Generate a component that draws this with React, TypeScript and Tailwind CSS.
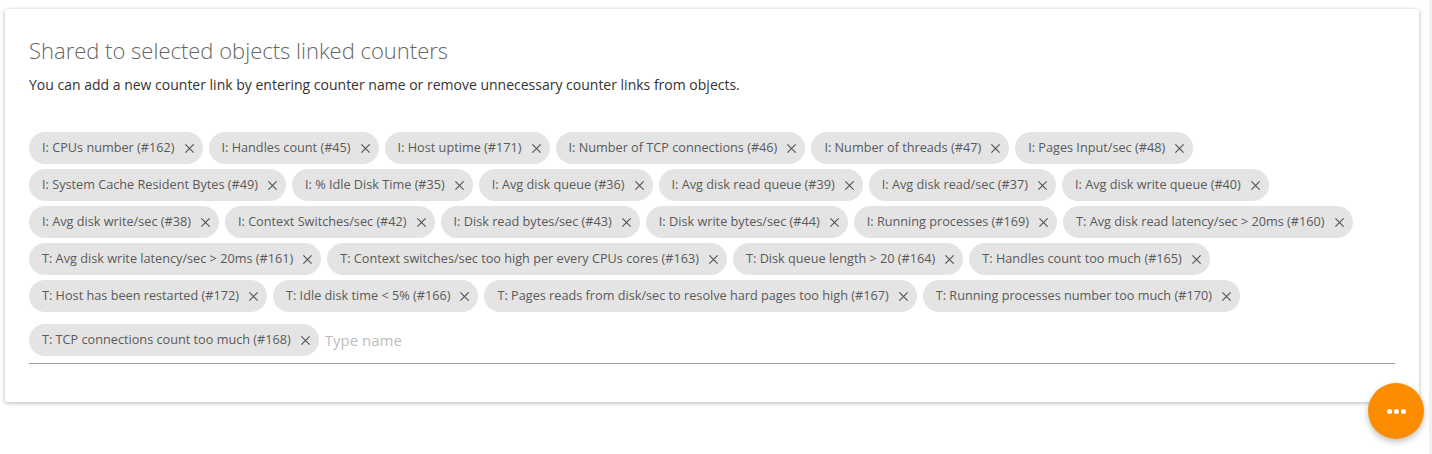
const counters = [
  "I: CPUs number (#162)",
  "I: Handles count (#45)",
  "I: Host uptime (#171)",
  "I: Number of TCP connections (#46)",
  "I: Number of threads (#47)",
  "I: Pages Input/sec (#48)",
  "I: System Cache Resident Bytes (#49)",
  "I: % Idle Disk Time (#35)",
  "I: Avg disk queue (#36)",
  "I: Avg disk read queue (#39)",
  "I: Avg disk read/sec (#37)",
  "I: Avg disk write queue (#40)",
  "I: Avg disk write/sec (#38)",
  "I: Context Switches/sec (#42)",
  "I: Disk read bytes/sec (#43)",
  "I: Disk write bytes/sec (#44)",
  "I: Running processes (#169)",
  "T: Avg disk read latency/sec > 20ms (#160)",
  "T: Avg disk write latency/sec > 20ms (#161)",
  "T: Context switches/sec too high per every CPUs cores (#163)",
  "T: Disk queue length > 20 (#164)",
  "T: Handles count too much (#165)",
  "T: Host has been restarted (#172)",
  "T: Idle disk time < 5% (#166)",
  "T: Pages reads from disk/sec to resolve hard pages too high (#167)",
  "T: Running processes number too much (#170)",
  "T: TCP connections count too much (#168)",
];

function Chip({ label }: { label: string }) {
  return (
    <div className="flex h-8 items-center rounded-full bg-[#e4e4e4] pl-[13px] pr-[8px]">
      <span className="text-[12.7px] text-[#5a5a5a] whitespace-nowrap">{label}</span>
      <svg className="ml-[9px] w-[11px] h-[11px] text-[#555]" viewBox="0 0 12 12" fill="none" stroke="currentColor" strokeWidth={1.3}>
        <path d="M1.5 1.5l9 9M10.5 1.5l-9 9" />
      </svg>
    </div>
  );
}

export default function App() {
  return (
    <div className="relative w-[1432px] h-[454px] bg-white overflow-hidden" style={{ fontFamily: '"Open Sans", "Noto Sans", sans-serif' }}>
      <div className="pl-[5px] pt-[9px] w-[1419px]">
        {/* Card */}
        <div className="bg-white rounded-[2px] shadow-[0_1px_4px_rgba(0,0,0,0.3)] pl-6 pr-6 pt-[26px] pb-[38px]">
          <h2 className="text-[22px] font-light text-[#666] leading-[30px]">Shared to selected objects linked counters</h2>
          <p className="mt-[10px] text-[14px] text-[#333] leading-5">
            You can add a new counter link by entering counter name or remove unnecessary counter links from objects.
          </p>

          {/* Chip list with input */}
          <div className="mt-[37px] flex flex-wrap items-center gap-x-[6px] gap-y-[5px] border-b border-[#9e9e9e]">
            {counters.map((c) => (
              <Chip key={c} label={c} />
            ))}
            <input
              className="flex-1 min-w-[120px] h-[46px] text-[15px] text-[#333] placeholder-[#bdbdbd] outline-none bg-transparent"
              placeholder="Type name"
            />
          </div>
        </div>
      </div>

      {/* Scrollbar strip */}
      <div className="absolute right-0 top-0 h-full w-[3px] bg-[#f1f1f1]" />

      {/* FAB */}
      <button className="absolute left-[1368px] top-[383px] w-14 h-14 rounded-full bg-[#fb8c00] shadow-[0_3px_6px_rgba(0,0,0,0.25)] flex items-center justify-center gap-[2px]">
        <span className="w-[5px] h-[5px] rounded-full bg-white" />
        <span className="w-[5px] h-[5px] rounded-full bg-white" />
        <span className="w-[5px] h-[5px] rounded-full bg-white" />
      </button>
    </div>
  );
}
